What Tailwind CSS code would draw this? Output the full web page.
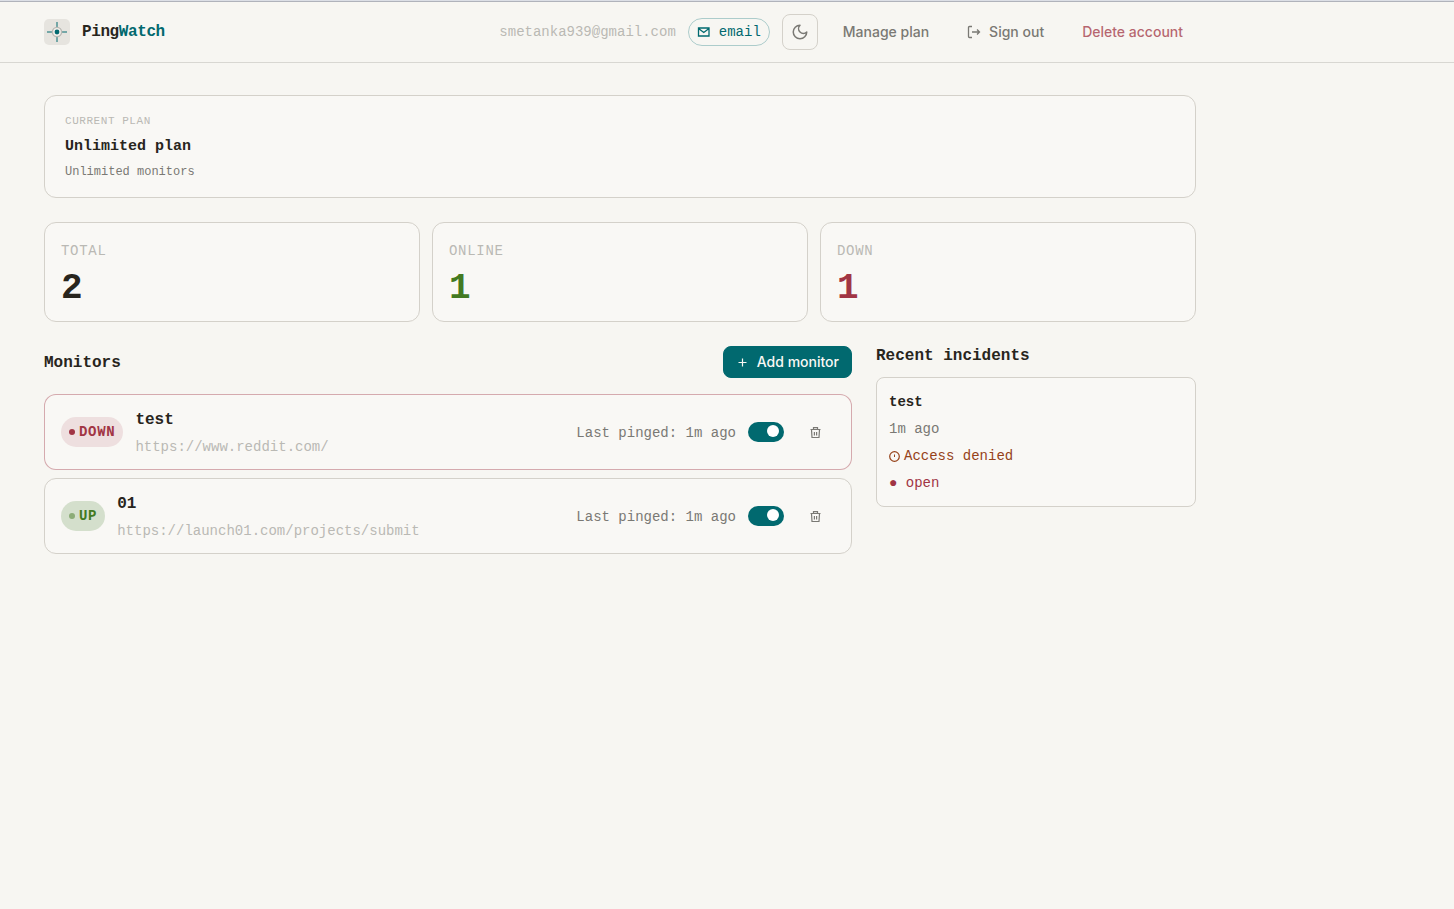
<!DOCTYPE html>
<html lang="en">
<head>
    <meta charset="UTF-8">
    <meta name="viewport" content="width=device-width, initial-scale=1.0">
    <title>PingWatch</title>
    <script src="https://cdn.jsdelivr.net/npm/@tailwindcss/browser@4"></script>
</head>
<body class="min-h-screen bg-[#f7f6f2] text-[#28251d] text-sm font-['Liberation_Mono',monospace]">
    <!-- Header -->
    <header class="border-t border-b border-t-[#dcdfe6] border-b-[#d8d7d2]">
        <div class="h-px bg-[#b0b3bb]"></div>
        <div class="max-w-[1240px] px-11 h-15 flex items-center justify-between">
            <a href="#" class="flex items-center gap-3 text-base font-bold tracking-tight">
                <svg class="size-[26px]" viewBox="0 0 26 26" fill="none">
                    <rect width="26" height="26" rx="5" fill="#e6e4df"/>
                    <path d="M13 3v6M13 17v6M3 13h6M17 13h6" stroke="#01696f" stroke-opacity=".5" stroke-width="2"/>
                    <circle cx="13" cy="13" r="4.6" fill="#f0eeea" stroke="#bab9b4" stroke-width="1.4"/>
                    <circle cx="13" cy="13" r="2.4" fill="#01696f"/>
                </svg>
                <span>Ping<span class="text-[#01696f]">Watch</span></span>
            </a>

            <div class="flex items-center gap-3">
                <span class="text-[#bab9b4]">smetanka939@gmail.com</span>
                <span class="h-7 px-2 flex items-center gap-2 border border-[#01696f]/30 rounded-full text-[#01696f]">
                    <svg class="size-3.5" viewBox="0 0 14 14" fill="none" stroke="currentColor" stroke-width="1.3">
                        <path d="M1.500 3h10.500v8H1.500zM1.500 3.500l5.250 4 5.250-4"/>
                    </svg>
                    email
                </span>
                <button aria-label="Toggle theme" class="size-9 flex items-center justify-center border border-[#d4d1ca] rounded-lg text-[#7a7974]">
                    <svg class="size-[18px]" viewBox="0 0 24 24" fill="none" stroke="currentColor" stroke-width="2" stroke-linecap="round" stroke-linejoin="round">
                        <path d="M12 3a6 6 0 0 0 9 9 9 9 0 1 1-9-9Z"/>
                    </svg>
                </button>
                <nav class="flex gap-3 font-['Inter',sans-serif] font-medium text-[#7a7974]">
                    <button class="h-9 px-3 border border-transparent">Manage plan</button>
                    <button class="h-9 px-3 border border-transparent flex items-center gap-2">
                        <svg class="size-3.5" viewBox="0 0 14 14" fill="none" stroke="currentColor" stroke-width="1.3">
                            <path d="M5 1.500H2.500a1 1 0 0 0-1 1v9a1 1 0 0 0 1 1H5M5 7h7.500M10 4.500L12.500 7 10 9.500"/>
                        </svg>
                        Sign out
                    </button>
                    <button class="h-9 px-3 border border-transparent text-[#a13544]/75">Delete account</button>
                </nav>
            </div>
        </div>
    </header>

    <main class="max-w-[1240px] px-11 py-8 flex flex-col gap-6">
        <!-- Current plan -->
        <section class="px-5 pt-[17px] pb-[15px] border border-[#d4d1ca] rounded-xl bg-[#f9f8f5]">
            <p class="text-[11px] leading-4 tracking-wider text-[#bab9b4]">CURRENT PLAN</p>
            <h2 class="mt-1.5 text-[15px] leading-6 font-bold">Unlimited plan</h2>
            <p class="mt-1 text-xs leading-[19px] text-[#7a7974]">Unlimited monitors</p>
        </section>

        <!-- Stats -->
        <section class="grid grid-cols-3 gap-3">
            <div class="px-4 pt-[17px] pb-3 border border-[#d4d1ca] rounded-xl bg-[#f9f8f5]">
                <p class="leading-[22px] tracking-wider text-[#bab9b4]">TOTAL</p>
                <p class="mt-[7px] text-4xl leading-10 font-bold">2</p>
            </div>
            <div class="px-4 pt-[17px] pb-3 border border-[#d4d1ca] rounded-xl bg-[#f9f8f5]">
                <p class="leading-[22px] tracking-wider text-[#bab9b4]">ONLINE</p>
                <p class="mt-[7px] text-4xl leading-10 font-bold text-[#437a22]">1</p>
            </div>
            <div class="px-4 pt-[17px] pb-3 border border-[#d4d1ca] rounded-xl bg-[#f9f8f5]">
                <p class="leading-[22px] tracking-wider text-[#bab9b4]">DOWN</p>
                <p class="mt-[7px] text-4xl leading-10 font-bold text-[#a13544]">1</p>
            </div>
        </section>

        <div class="grid grid-cols-[1fr_320px] gap-6 items-start">
            <!-- Monitors -->
            <section>
                <div class="mb-4 flex items-center justify-between">
                    <h2 class="pt-0.5 text-base font-bold">Monitors</h2>
                    <button class="h-8 px-3 flex items-center gap-2 border border-[#01696f] rounded-lg bg-[#01696f] text-[#f9f8f4] font-['Inter',sans-serif] font-medium">
                        <svg class="size-[13px]" viewBox="0 0 13 13" fill="none" stroke="currentColor" stroke-width="1.2">
                            <path d="M6.500 2.500v8M2.500 6.500h8"/>
                        </svg>
                        Add monitor
                    </button>
                </div>

                <ul class="flex flex-col gap-2">
                    <li class="px-4 py-3 flex items-center gap-3 border border-[#a13544]/40 rounded-xl bg-[#f9f8f5]">
                        <span class="px-2 py-1 flex items-center gap-1 rounded-full bg-[#eedfdf] leading-[22px] font-bold tracking-wider text-[#a13544]">
                            <span class="size-1.5 rounded-full bg-[#a13544]"></span>DOWN
                        </span>
                        <div class="flex-1">
                            <h3 class="text-base leading-[26px] font-bold">test</h3>
                            <p class="mt-1 leading-5 text-[#bab9b4]">https://www.reddit.com/</p>
                        </div>
                        <span class="pt-0.5 text-[#7a7974]">Last pinged: 1m ago</span>
                        <input type="checkbox" role="switch" checked aria-label="Monitor test" class="appearance-none w-9 h-5 rounded-full bg-[#bab9b4] checked:bg-[#01696f] before:block before:size-3 before:rounded-full before:bg-white before:mt-[3px] before:ml-[5px] checked:before:ml-[19px]">
                        <button aria-label="Delete test" class="w-[39px] h-8 flex items-center justify-center text-[#7a7974]">
                            <svg class="size-[13px]" viewBox="0 0 13 13" fill="none" stroke="currentColor" stroke-width="1.2">
                                <path d="M1.500 3.500h10M4.500 3.500V1.700h4v1.800M2.500 3.500l.5 8h7l.5-8M5.400 6v3.500M7.600 6v3.500"/>
                            </svg>
                        </button>
                    </li>
                    <li class="px-4 py-3 flex items-center gap-3 border border-[#d4d1ca] rounded-xl bg-[#f9f8f5]">
                        <span class="px-2 py-1 flex items-center gap-1 rounded-full bg-[#d4dfcc] leading-[22px] font-bold tracking-wider text-[#437a22]">
                            <span class="size-1.5 rounded-full bg-[#437a22]/50"></span>UP
                        </span>
                        <div class="flex-1">
                            <h3 class="text-base leading-[26px] font-bold">01</h3>
                            <p class="mt-1 leading-5 text-[#bab9b4]">https://launch01.com/projects/submit</p>
                        </div>
                        <span class="pt-0.5 text-[#7a7974]">Last pinged: 1m ago</span>
                        <input type="checkbox" role="switch" checked aria-label="Monitor 01" class="appearance-none w-9 h-5 rounded-full bg-[#bab9b4] checked:bg-[#01696f] before:block before:size-3 before:rounded-full before:bg-white before:mt-[3px] before:ml-[5px] checked:before:ml-[19px]">
                        <button aria-label="Delete 01" class="w-[39px] h-8 flex items-center justify-center text-[#7a7974]">
                            <svg class="size-[13px]" viewBox="0 0 13 13" fill="none" stroke="currentColor" stroke-width="1.2">
                                <path d="M1.500 3.500h10M4.500 3.500V1.700h4v1.800M2.500 3.500l.5 8h7l.5-8M5.400 6v3.500M7.600 6v3.500"/>
                            </svg>
                        </button>
                    </li>
                </ul>
            </section>

            <!-- Incidents -->
            <section>
                <h2 class="mb-2.5 text-base leading-[21px] font-bold">Recent incidents</h2>
                <div class="px-3 pt-[13px] pb-[11px] flex flex-col gap-1 border border-[#d4d1ca] rounded-lg bg-[#f9f8f5] leading-[23px]">
                    <h3 class="font-bold">test</h3>
                    <p class="text-[#7a7974]">1m ago</p>
                    <p class="flex items-center gap-1 text-[#964219]">
                        <svg class="size-[11px]" viewBox="0 0 11 11" fill="none" stroke="currentColor">
                            <circle cx="5.500" cy="5.500" r="4.800" stroke-width="1.2"/>
                            <path d="M5.500 3.500v2.500"/>
                        </svg>
                        Access denied
                    </p>
                    <p class="text-[#a13544]">● open</p>
                </div>
            </section>
        </div>
    </main>
</body>
</html>
